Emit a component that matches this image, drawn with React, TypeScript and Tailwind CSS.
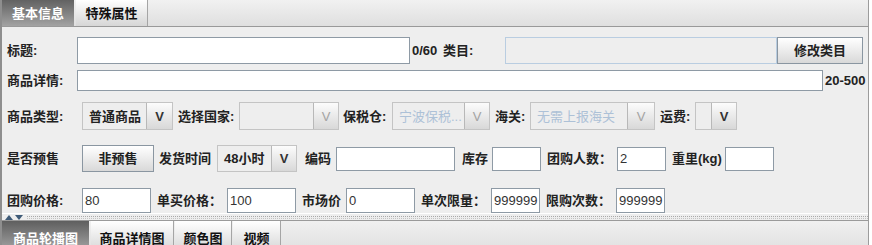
import React from "react";

const FONT = "font-['Liberation_Sans','Noto_Sans_CJK_SC',sans-serif]";

function Label({ children, cls }: { children: React.ReactNode; cls: string }) {
  return (
    <span className={`shrink-0 whitespace-nowrap text-[13px] leading-[15px] font-bold text-[#222] ${cls}`}>
      {children}
    </span>
  );
}

function Input({ cls, value }: { cls: string; value?: string }) {
  return (
    <div
      className={`shrink-0 bg-white border border-[#8e9aa5] flex items-center pl-[2px] text-[13px] leading-[15px] text-[#333] ${cls}`}
    >
      {value}
    </div>
  );
}

function Combo({
  cls,
  vcls,
  text,
  disabled,
}: {
  cls: string;
  vcls: string;
  text?: string;
  disabled?: boolean;
}) {
  return (
    <div className={`shrink-0 flex border border-[#c4c4c4] bg-[#eeeeee] ${cls}`}>
      <div
        className={`flex-1 flex items-center pl-[6px] whitespace-nowrap overflow-hidden text-[13px] leading-[15px] ${
          disabled ? "text-[#adc1d7] font-normal" : "font-bold text-[#222]"
        }`}
      >
        {text}
      </div>
      <div
        className={`shrink-0 flex items-center justify-center border-l border-[#b8b8b8] bg-linear-to-b from-[#fcfcfc] to-[#d8d8d8] text-[13px] leading-[15px] ${
          disabled ? "text-[#a3a3a3] font-normal" : "text-[#333] font-bold"
        } ${vcls}`}
      >
        V
      </div>
    </div>
  );
}

function Button({ cls, children }: { cls: string; children: React.ReactNode }) {
  return (
    <div
      className={`shrink-0 flex items-center justify-center border border-[#8a96a1] bg-linear-to-b from-white to-[#d9d9d9] font-bold text-[13px] leading-[15px] text-[#222] ${cls}`}
    >
      {children}
    </div>
  );
}

export default function App() {
  return (
    <div className={`w-[872px] h-[245px] bg-white overflow-hidden ${FONT}`}>
      <div className="w-[869px] h-[245px] bg-[#eeeeee] border-l-2 border-l-[#8e8e8e] border-r border-r-[#9c9c9c] flex flex-col">
        {/* top tabs */}
        <div className="h-[27px] shrink-0 flex border-b border-[#999999] bg-linear-to-b from-[#f1f1f1] to-[#dfdfdf]">
          <div className="w-[72px] h-[26px] flex items-center justify-center bg-linear-to-b from-[#626262] to-[#a3a3a3] text-white font-bold text-[13px] leading-[15px]">
            基本信息
          </div>
          <div className="ml-[2px] w-[72px] h-[26px] flex items-center justify-center bg-linear-to-b from-white to-[#d6d6d6] border-r border-[#a5a5a5] text-[#111] font-bold text-[13px] leading-[15px]">
            特殊属性
          </div>
        </div>

        {/* content */}
        <div className="flex flex-col pl-[5px]">
          {/* row 1 */}
          <div className="mt-[10px] h-[27px] flex items-center">
            <Label cls="w-[70px]">标题:</Label>
            <Input cls="w-[333px] h-[27px]" />
            <Label cls="ml-[2px] w-[31px]">0/60</Label>
            <Label cls="w-[62px]">类目:</Label>
            <div className="shrink-0 w-[272px] h-[27px] border border-[#b9cde1] bg-[#eeeeee]" />
            <Button cls="w-[86px] h-[27px]">修改类目</Button>
          </div>

          {/* row 2 */}
          <div className="mt-[6px] h-[21px] flex items-center">
            <Label cls="w-[70px]">商品详情:</Label>
            <Input cls="w-[746px] h-[21px]" />
            <Label cls="ml-[2px]">20-500</Label>
          </div>

          {/* row 3 */}
          <div className="mt-[11px] h-[28px] flex items-center">
            <Label cls="w-[75px]">商品类型:</Label>
            <Combo cls="w-[91px] h-[28px]" vcls="w-[26px]" text="普通商品" />
            <Label cls="ml-[5px] w-[61px]">选择国家:</Label>
            <Combo cls="w-[100px] h-[28px]" vcls="w-[25px]" disabled />
            <Label cls="ml-[4px] w-[49px]">保税仓:</Label>
            <Combo cls="w-[98px] h-[28px]" vcls="w-[25px]" text="宁波保税..." disabled />
            <Label cls="ml-[5px] w-[35px]">海关:</Label>
            <Combo cls="w-[125px] h-[28px]" vcls="w-[27px]" text="无需上报海关" disabled />
            <Label cls="ml-[5px] w-[35px]">运费:</Label>
            <Combo cls="w-[42px] h-[28px]" vcls="w-[25px]" />
          </div>

          {/* row 4 */}
          <div className="mt-[15px] h-[27px] flex items-center">
            <Label cls="w-[75px]">是否预售</Label>
            <Button cls="w-[72px] h-[27px]">非预售</Button>
            <Label cls="ml-[5px] w-[58px]">发货时间</Label>
            <Combo cls="w-[80px] h-[27px]" vcls="w-[25px]" text="48小时" />
            <Label cls="ml-[8px] w-[31px]">编码</Label>
            <Input cls="w-[119px] h-[24px]" />
            <Label cls="ml-[7px] w-[30px]">库存</Label>
            <Input cls="w-[49px] h-[24px]" />
            <Label cls="ml-[6px] w-[70px]">团购人数：</Label>
            <Input cls="w-[49px] h-[24px]" value="2" />
            <Label cls="ml-[6px] w-[53px]">重里(kg)</Label>
            <Input cls="w-[49px] h-[24px]" />
          </div>

          {/* row 5 */}
          <div className="mt-[15px] h-[26px] flex items-center">
            <Label cls="w-[75px]">团购价格:</Label>
            <Input cls="w-[69px] h-[25px]" value="80" />
            <Label cls="ml-[6px] w-[70px]">单买价格：</Label>
            <Input cls="w-[69px] h-[25px]" value="100" />
            <Label cls="ml-[6px] w-[44px]">市场价</Label>
            <Input cls="w-[69px] h-[25px]" value="0" />
            <Label cls="ml-[6px] w-[70px]">单次限量：</Label>
            <Input cls="w-[49px] h-[25px]" value="999999" />
            <Label cls="ml-[6px] w-[70px]">限购次数：</Label>
            <Input cls="w-[49px] h-[25px]" value="999999" />
          </div>
        </div>

        {/* splitter */}
        <div className="h-[7px] shrink-0 border-t border-white flex items-center">
          <svg width="22" height="5" viewBox="0 0 22 5" className="ml-[3px] shrink-0">
            <polygon points="0,5 4,0 8,5" fill="#3f5b78" />
            <polygon points="10,0 18,0 14,5" fill="#3f5b78" />
          </svg>
          <div className="flex-1 flex flex-col gap-[1px]">
            <div className="border-t border-dotted border-[#a9a9a9]" />
            <div className="border-t border-dotted border-[#c4c4c4]" />
          </div>
        </div>

        {/* bottom tabs */}
        <div className="flex-1 flex border-t border-[#9a9a9a] bg-linear-to-b from-[#f0f0f0] to-[#e2e2e2]">
          <div className="w-[87px] h-[26px] pt-[10px] flex justify-center bg-linear-to-b from-[#5f5f5f] to-[#9c9c9c] text-white font-bold text-[13px] leading-[15px]">
            商品轮播图
          </div>
          <div className="ml-[2px] w-[83px] h-[26px] pt-[10px] flex justify-center bg-linear-to-b from-white to-[#dcdcdc] border-r border-[#a5a5a5] text-[#111] font-bold text-[13px] leading-[15px]">
            商品详情图
          </div>
          <div className="ml-[1px] w-[57px] h-[26px] pt-[10px] flex justify-center bg-linear-to-b from-white to-[#dcdcdc] border-r border-[#a5a5a5] text-[#111] font-bold text-[13px] leading-[15px]">
            颜色图
          </div>
          <div className="ml-[1px] w-[48px] h-[26px] pt-[10px] flex justify-center bg-linear-to-b from-white to-[#dcdcdc] border-r border-[#a5a5a5] text-[#111] font-bold text-[13px] leading-[15px]">
            视频
          </div>
        </div>
      </div>
    </div>
  );
}
